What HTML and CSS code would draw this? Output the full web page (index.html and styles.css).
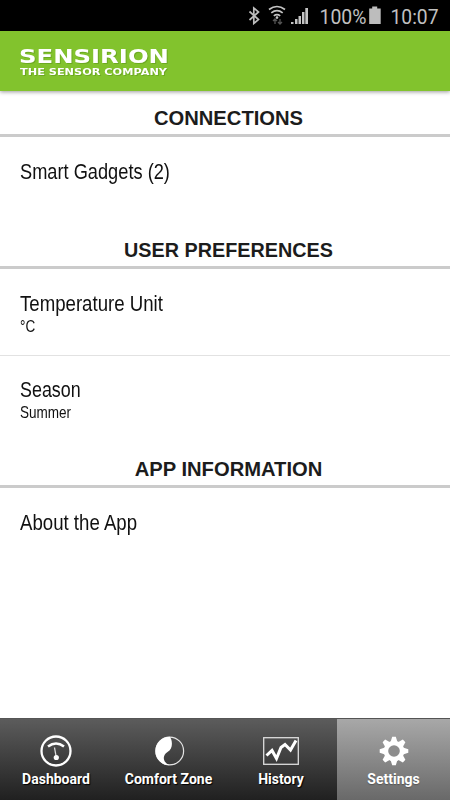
FILE: index.html
```
<!DOCTYPE html>
<html lang="en">
<head>
<meta charset="utf-8">
<title>Settings</title>
<link rel="stylesheet" href="styles.css">
</head>
<body>
<div class="screen">
  <div class="status">
    <svg width="202" height="31" viewBox="0 0 202 31" class="status-art">
      <path d="M1.500 11.500l9 8-4.700 4V8l4.700 4-9 8" fill="none" stroke="#bdbdbd" stroke-width="1.700"/>
      <g fill="none" stroke="#c4c4c4" stroke-width="1.700">
        <path d="M21 9.500q8-6 16 0M23.300 12.800q5.700-4.500 11.400 0M25.800 15.800q3.200-2.500 6.400 0"/>
      </g>
      <circle cx="29" cy="17.600" r="1.300" fill="#c4c4c4"/>
      <path d="M27 24v-5M25 21l2-2 2 2M32 19v5M30 22l2 2 2-2" fill="none" stroke="#555" stroke-width="1.300"/>
      <path d="M43 24v-2h2.500v2zM47 24v-5h2.500v5zM50.500 24v-8h2.500v8zM54 24V12h2.500v12zM57.300 24V8h2.700v16z" fill="#c4c4c4"/>
      <text x="71.500" y="23.500" font-size="21" textLength="47" lengthAdjust="spacingAndGlyphs">100%</text>
      <path d="M122 8.500h3V6.500h5v2h3.500V24H122z" fill="#bdbdbd" transform="translate(-.8 0)"/>
      <text x="142.500" y="23.500" font-size="21" textLength="48" lengthAdjust="spacingAndGlyphs">10:07</text>
    </svg>
  </div>
  <header class="brand">
    <svg width="154" height="34" viewBox="0 0 154 34" class="brand-art">
      <text x="1" y="17.600" font-size="19" textLength="150" lengthAdjust="spacingAndGlyphs">SENSIRION</text>
      <text x="2" y="29.800" font-size="8" textLength="147" lengthAdjust="spacingAndGlyphs">THE SENSOR COMPANY</text>
    </svg>
  </header>
  <main class="content">
    <h2 class="heading">CONNECTIONS</h2>
    <div class="row row-last"><span class="title">Smart Gadgets (2)</span></div>
    <h2 class="heading heading-tight">USER PREFERENCES</h2>
    <div class="row row-unit"><span class="title title-wide">Temperature Unit</span><span class="value">°C</span></div>
    <div class="row row-season"><span class="title title-slim">Season</span><span class="value">Summer</span></div>
    <h2 class="heading">APP INFORMATION</h2>
    <div class="row"><span class="title title-wide">About the App</span></div>
  </main>
  <nav class="tabs">
    <div class="tab">
      <svg width="36" height="34" viewBox="0 0 36 34"><circle cx="18" cy="17" r="14.500" fill="none" stroke="#fff" stroke-width="2.300"/><path d="M10 12.500Q18 6.500 26 12.500" fill="none" stroke="#fff" stroke-width="2.600"/><path d="M16.500 13.500L18 22" stroke="#ddd" stroke-width="1.300"/><circle cx="18.300" cy="23.500" r="2.600" fill="#fff"/></svg>
      <span>Dashboard</span>
    </div>
    <div class="tab">
      <svg width="36" height="34" viewBox="0 0 36 34"><circle cx="18.700" cy="17" r="13.900" fill="none" stroke="#e4e4e4" stroke-width="1.200"/><path d="M18.700 2.700A14.300 14.300 0 0 0 18.700 31.300C11.500 28.500 11 21.500 16.500 18C22.500 15 21.500 5.500 18.700 2.700Z" fill="#fff"/></svg>
      <span>Comfort Zone</span>
    </div>
    <div class="tab">
      <svg width="36" height="34" viewBox="0 0 36 34"><rect x=".7" y="3.700" width="34.600" height="26.600" fill="none" stroke="#ddd" stroke-width="1.300"/><path d="M3.500 21.500L9 16.500L13.500 24.500L18 13.500L22 10.500L27.500 16L33 6.500" fill="none" stroke="#fff" stroke-width="3"/></svg>
      <span>History</span>
    </div>
    <div class="tab active">
      <svg width="36" height="34" viewBox="-18 -17 36 34"><g fill="#fff"><path d="M-3.400-9L-1.800-14.300H1.800L3.400-9V9L1.800 14.300H-1.800L-3.400 9Z"/><path d="M-3.400-9L-1.800-14.300H1.800L3.400-9V9L1.800 14.300H-1.800L-3.400 9Z" transform="rotate(45)"/><path d="M-3.400-9L-1.800-14.300H1.800L3.400-9V9L1.800 14.300H-1.800L-3.400 9Z" transform="rotate(90)"/><path d="M-3.400-9L-1.800-14.300H1.800L3.400-9V9L1.800 14.300H-1.800L-3.400 9Z" transform="rotate(135)"/><circle r="10.300"/></g><circle r="5.800" fill="#8d8d8d"/></svg>
      <span>Settings</span>
    </div>
  </nav>
</div>
</body>
</html>
```
FILE: styles.css
```
* { box-sizing: border-box; }
body { margin: 0; background: #fff; font-family: "Liberation Sans", Arial, sans-serif; }
.screen { width: 450px; height: 800px; display: flex; flex-direction: column; overflow: hidden; }
.status { height: 31px; background: #000; display: flex; justify-content: flex-end; flex: none; }
.status-art { margin-right: 0; display: block; }
.status-art text { font-family: Roboto, sans-serif; fill: #c0c0c0; }
.brand { height: 60px; flex: none; background: #82c32d; padding: 14px 0 0 18px; box-shadow: 0 1px 4px rgba(0, 0, 0, .4); }
.brand-art { display: block; filter: drop-shadow(1px 1px 0 rgba(60, 110, 10, .3)); }
.brand-art text { font-family: "DejaVu Sans", sans-serif; font-weight: 700; fill: #fff; }
.content { flex: 1; padding-top: 12px; }
.heading { margin: 0; height: 34px; padding-left: 7px; border-bottom: 3px solid #cbcbcb; text-align: center; font-size: 20.200px; line-height: 31px; color: #1c1c1c; }
.heading-tight { font-size: 19.800px; }
.row { padding: 21px 20px 0; display: flex; flex-direction: column; align-items: flex-start; color: #111; }
.title { font-size: 22.500px; line-height: 28px; transform: scaleX(.81); transform-origin: left; white-space: nowrap; }
.title-wide { transform: scaleX(.828); }
.title-slim { transform: scaleX(.795); }
.value { font-size: 16.500px; line-height: 17px; transform: scaleX(.82); transform-origin: left; }
.row-last { height: 98px; }
.row-unit { height: 87px; border-bottom: 1px solid #e2e2e2; }
.row-season { height: 98px; padding-top: 20px; }
.tabs { height: 82px; flex: none; display: grid; grid-template-columns: 112px 113px 112px 113px; border-top: 1px solid #555; }
.tab { background: linear-gradient(#5c5c5c, #202020); display: flex; flex-direction: column; align-items: center; padding-top: 15px; }
.tab svg { display: block; }
.tab span { font: 700 14px/20px Roboto, sans-serif; color: #fff; text-shadow: 1px 1px 1px #000; margin-top: 1px; }
.tab.active { background: linear-gradient(#a8a8a8, #696969); }
.tab.active span { text-shadow: 0 1px 1px #555; }
```
